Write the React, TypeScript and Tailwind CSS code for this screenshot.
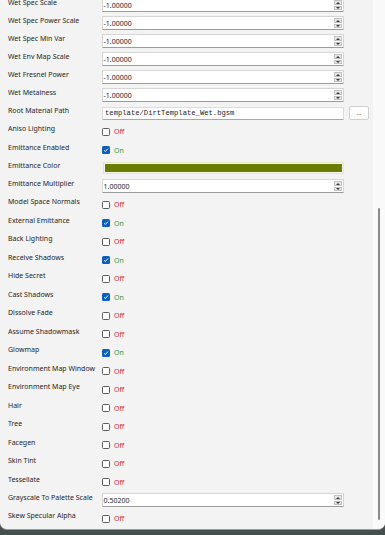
import React from 'react';

type Row =
  | { label: string; kind: 'num'; value: string }
  | { label: string; kind: 'path'; value: string }
  | { label: string; kind: 'check'; on: boolean }
  | { label: string; kind: 'color' };

const ROWS: Row[] = [
  { label: 'Wet Spec Scale', kind: 'num', value: '-1.00000' },
  { label: 'Wet Spec Power Scale', kind: 'num', value: '-1.00000' },
  { label: 'Wet Spec Min Var', kind: 'num', value: '-1.00000' },
  { label: 'Wet Env Map Scale', kind: 'num', value: '-1.00000' },
  { label: 'Wet Fresnel Power', kind: 'num', value: '-1.00000' },
  { label: 'Wet Metalness', kind: 'num', value: '-1.00000' },
  { label: 'Root Material Path', kind: 'path', value: 'template/DirtTemplate_Wet.bgsm' },
  { label: 'Aniso Lighting', kind: 'check', on: false },
  { label: 'Emittance Enabled', kind: 'check', on: true },
  { label: 'Emittance Color', kind: 'color' },
  { label: 'Emittance Multiplier', kind: 'num', value: '1.00000' },
  { label: 'Model Space Normals', kind: 'check', on: false },
  { label: 'External Emittance', kind: 'check', on: true },
  { label: 'Back Lighting', kind: 'check', on: false },
  { label: 'Receive Shadows', kind: 'check', on: true },
  { label: 'Hide Secret', kind: 'check', on: false },
  { label: 'Cast Shadows', kind: 'check', on: true },
  { label: 'Dissolve Fade', kind: 'check', on: false },
  { label: 'Assume Shadowmask', kind: 'check', on: false },
  { label: 'Glowmap', kind: 'check', on: true },
  { label: 'Environment Map Window', kind: 'check', on: false },
  { label: 'Environment Map Eye', kind: 'check', on: false },
  { label: 'Hair', kind: 'check', on: false },
  { label: 'Tree', kind: 'check', on: false },
  { label: 'Facegen', kind: 'check', on: false },
  { label: 'Skin Tint', kind: 'check', on: false },
  { label: 'Tessellate', kind: 'check', on: false },
  { label: 'Grayscale To Palette Scale', kind: 'num', value: '0.50200' },
  { label: 'Skew Specular Alpha', kind: 'check', on: false },
];

function Spinner() {
  return (
    <div className="flex flex-col w-[9px] h-full py-[1px] pr-[1px] gap-[1px]">
      {/* up / down arrows */}
      <div className="flex-1 flex items-center justify-center bg-[#e8e8e8] border border-[#c2c2c2]">
        <svg width="4" height="2" viewBox="0 0 4 2">
          <path d="M0 2 L2 0 L4 2 Z" fill="#3a3a3a" />
        </svg>
      </div>
      <div className="flex-1 flex items-center justify-center bg-[#e8e8e8] border border-[#c2c2c2]">
        <svg width="4" height="2" viewBox="0 0 4 2">
          <path d="M0 0 L4 0 L2 2 Z" fill="#3a3a3a" />
        </svg>
      </div>
    </div>
  );
}

function NumBox({ value }: { value: string }) {
  return (
    <div className="w-[242px] h-[14px] flex items-center bg-white border border-[#d6d6d6] border-b-[#9c9c9c] rounded-[1px]">
      <span className="flex-1 pl-[0.5px] text-[7px] leading-none text-[#1b1b1b]">{value}</span>
      <Spinner />
    </div>
  );
}

function CheckBox({ on }: { on: boolean }) {
  return (
    <div className="flex items-center gap-[4px]">
      {on ? (
        <div className="w-[8px] h-[8px] rounded-[1.5px] bg-[#0a5fc2] flex items-center justify-center">
          <svg width="6" height="6" viewBox="0 0 6 6">
            <path d="M1 3.2 L2.4 4.5 L5 1.5" fill="none" stroke="#fff" strokeWidth="0.9" />
          </svg>
        </div>
      ) : (
        <div className="w-[8px] h-[8px] rounded-[1.5px] bg-white border border-[#5c5c5c]" />
      )}
      <span className={`text-[7px] leading-none ${on ? 'text-[#2f9a43]' : 'text-[#e3203b]'}`}>
        {on ? 'On' : 'Off'}
      </span>
    </div>
  );
}

function Control({ row }: { row: Row }) {
  if (row.kind === 'num') return <NumBox value={row.value} />;
  if (row.kind === 'check') return <CheckBox on={row.on} />;
  if (row.kind === 'color')
    return (
      <div className="w-[241px] h-[12px] ml-[1px] border border-[#e2e6c4] p-[1px] bg-[#f6f7ea]">
        <div className="w-full h-full bg-[#6a7d00]" />
      </div>
    );
  return (
    <div className="flex items-center gap-[5px]">
      <div className="w-[242px] h-[13px] flex items-center bg-white border border-[#dcdcdc] border-b-[#a8a8a8] rounded-[1px]">
        <span className="pl-[2px] text-[7.2px] leading-none text-[#1b1b1b] font-['Liberation_Mono',monospace]">
          {row.value}
        </span>
      </div>
      <button className="w-[20px] h-[14px] flex items-end justify-center pb-[3px] bg-[#fdfdfd] border border-[#d0d0d0] rounded-[2px] text-[6px] leading-none text-[#444]">
        ...
      </button>
    </div>
  );
}

export default function App() {
  return (
    <div className="w-[385px] h-[535px] overflow-hidden bg-[#44504d] font-['Noto_Sans',sans-serif]">
      <div className="h-[530px] flex bg-[#f3f3f3] border-b border-[#9a9a9a] rounded-b-[7px] overflow-hidden">
        {/* Property rows */}
        <div className="flex-1 overflow-hidden">
          <div className="flex flex-col -mt-[3.7px]">
            {ROWS.map((row) => (
              <div
                key={row.label}
                className={`flex items-center shrink-0 pl-[8px] ${row.kind === 'check' ? 'h-[18.5px]' : 'h-[18px]'}`}
              >
                <span className="w-[94px] shrink-0 pb-[6px] text-[7px] leading-none text-[#1e1e1e] whitespace-nowrap">
                  {row.label}
                </span>
                <Control row={row} />
              </div>
            ))}
          </div>
        </div>

        {/* Scrollbar */}
        <div className="w-[12px] shrink-0 bg-[#f9f9f9] flex justify-center pt-[208px] pb-[10px]">
          <div className="w-[2px] h-[312px] rounded-full bg-[#8a8a8a]" />
        </div>
      </div>
    </div>
  );
}
